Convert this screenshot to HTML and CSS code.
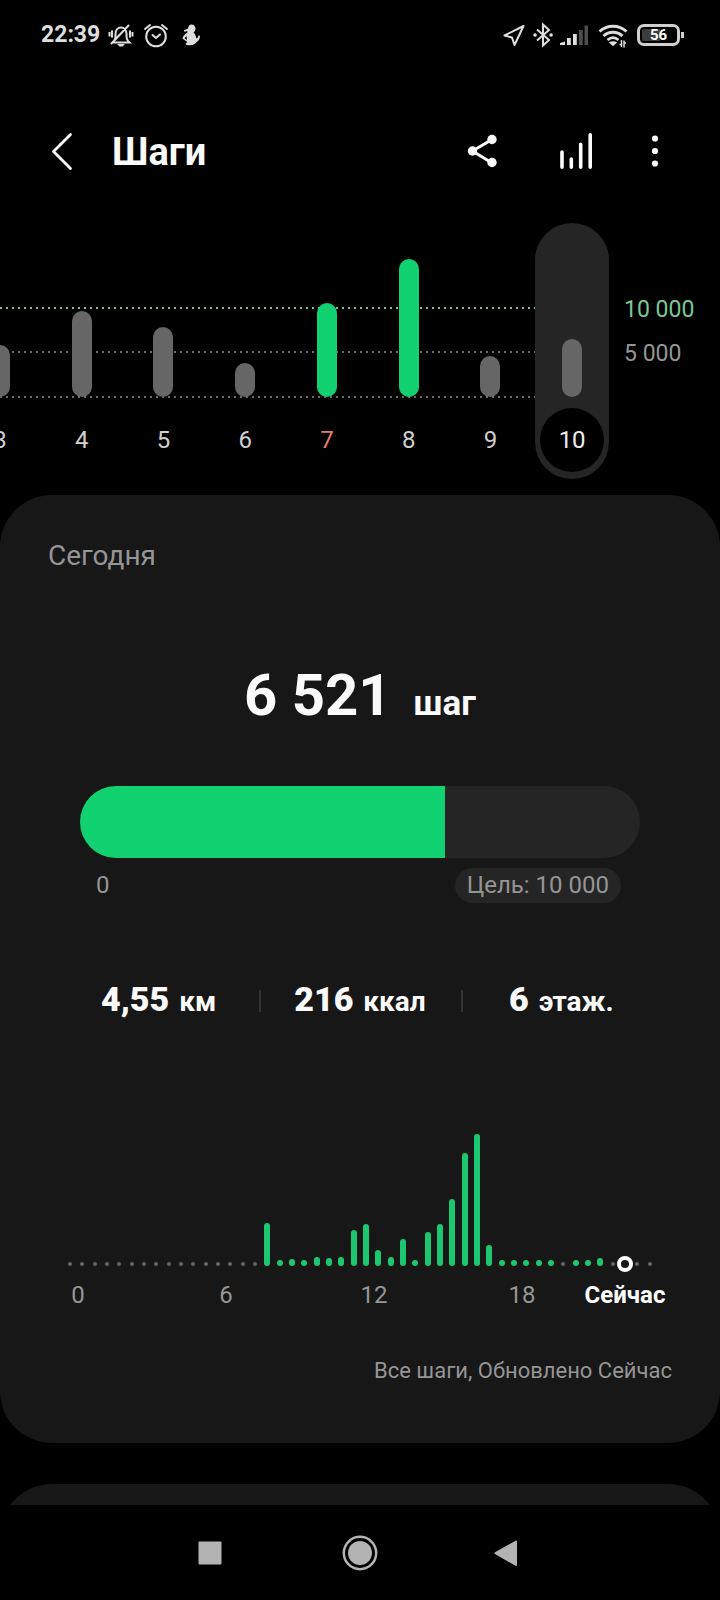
FILE: index.html
```html
<!DOCTYPE html>
<html lang="ru">
<head>
<meta charset="utf-8">
<meta name="viewport" content="width=device-width, initial-scale=1">
<title>Шаги</title>
<link rel="stylesheet" href="styles.css">
</head>
<body>
<div class="status">
  <span class="clock">22:39</span>
  <svg class="icon" width="26" height="26" viewBox="0 0 26 26" fill="none" stroke="currentColor" stroke-width="2">
    <path d="M4.500 20.500C7.500 18 7.500 16 7.500 12c0-4 2.500-6.500 5.500-6.500s5.500 2.500 5.500 6.500c0 4 0 6 3 8.500zM21 3 3 22M1.500 10v4.500M4 8.500v7M22 8.500v7M24.500 10v4.500"/>
    <path d="M9 22h8l-2.500 2.500h-3z" fill="currentColor" stroke="none"/>
  </svg>
  <svg class="icon alarm" width="26" height="26" viewBox="0 0 26 26" fill="none" stroke="currentColor" stroke-width="2" stroke-linecap="round">
    <circle cx="13" cy="14.500" r="9.800"/><path d="m9.500 13 3.500 3 4-3.500M2 7 7 3M24 7 19 3"/>
  </svg>
  <svg class="icon figure" width="22" height="26" viewBox="0 0 22 26">
    <path fill="currentColor" d="M11.500 2.500c2.500 0 4 1.800 4 4 0 1.800-.8 3-2 4 1.700 1.500 2.700 3.500 2.700 6 1.300-.4 2-1.500 2.300-3l1.500.3c0 3-1.300 5.200-3.300 6.200-1.200 2-3.500 3.200-6.700 3.200-2.500 0-4-.5-4.600-1.500l2-1.700-5-3.500c.5-2.500 2.500-4.500 5-6L7.300 9l-3 .8-.4-1.500 4.200-1.700C8.300 4 9.500 2.500 11.500 2.500zM6.500 14l-2 2.200L7 18z"/>
  </svg>
  <span class="grow"></span>
  <svg class="icon" width="24" height="26" viewBox="0 0 24 26" fill="none" stroke="currentColor" stroke-width="2" stroke-linejoin="round">
    <path d="M21.500 4 2.500 13.500l7.500 2 2.500 7.500z"/>
  </svg>
  <svg class="icon bt" width="22" height="26" viewBox="0 0 22 26" fill="none" stroke="currentColor" stroke-width="2">
    <path d="m5 7.500 12 10.500-6 5.500V2.500l6 5.500L5 18.500"/><path stroke-width="3.500" stroke-linecap="round" d="M3 13h.1M19 13h.1"/>
  </svg>
  <svg class="icon" width="28" height="26" viewBox="0 0 28 26" fill="currentColor">
    <path d="M0 23v-2l5-1.500V23zM7 16h3.800v7H7zM13 12h3.800v11H13z"/><path opacity=".35" d="M19 8h3.800v15H19zM24.500 3.500H28V23h-3.500z"/>
  </svg>
  <svg class="icon wifi" width="30" height="26" viewBox="0 0 30 26" fill="none" stroke="currentColor" stroke-width="2.800">
    <path d="M1.500 9.500c7.500-7 19.500-7 27 0M5.500 14c5.500-5 13.500-5 19 0M9.500 18c3.500-3 7.500-3 11 0"/><path fill="currentColor" stroke="none" d="m10.800 20.500 4.200 3.700 4.200-3.700c-2.600-1.800-5.800-1.800-8.400 0z"/><path stroke-width="1.500" d="M23.500 18v7M21.500 22.500h2M26 18.500v7M26 21h2"/>
  </svg>
  <span class="battery">56</span>
</div>

<header class="header">
  <button class="tool back" aria-label="Назад"><svg width="24" height="40" viewBox="0 0 24 40" fill="none" stroke="currentColor" stroke-width="2.800" stroke-linecap="round" stroke-linejoin="round"><path d="M20.500 3.500 3.500 20.500l17 17"/></svg></button>
  <h1 class="title">Шаги</h1>
  <button class="tool" aria-label="Поделиться"><svg width="32" height="40" viewBox="0 0 32 40"><path d="M26 8.500 6.500 20 26 32" fill="none" stroke="currentColor" stroke-width="3"/><g fill="currentColor"><circle cx="26" cy="8.500" r="4.700"/><circle cx="6.500" cy="20" r="4.700"/><circle cx="26" cy="31.500" r="4.700"/></g></svg></button>
  <button class="tool stats-button" aria-label="Статистика"><svg width="34" height="40" viewBox="0 0 34 40" fill="none" stroke="currentColor" stroke-width="3.600" stroke-linecap="round"><path d="M3 21v15.200M12.300 28v8.200M21.700 13.300v22.900M31.200 3.800v32.400"/></svg></button>
  <button class="tool" aria-label="Ещё"><svg width="12" height="40" viewBox="0 0 12 40" fill="currentColor"><circle cx="6" cy="7.500" r="3.100"/><circle cx="6" cy="20" r="3.100"/><circle cx="6" cy="32.500" r="3.100"/></svg></button>
</header>

<main class="main">
  <section class="week">
    <div class="plot">
      <div class="lines"><i class="line goal"></i><i class="line"></i><i class="line"></i></div>
      <div class="days">
        <div class="day"><i class="bar" style="height:52px"></i><span class="num">3</span></div>
        <div class="day"><i class="bar" style="height:86px"></i><span class="num">4</span></div>
        <div class="day"><i class="bar" style="height:70px"></i><span class="num">5</span></div>
        <div class="day"><i class="bar" style="height:34px"></i><span class="num">6</span></div>
        <div class="day"><i class="bar done" style="height:94px"></i><span class="num sunday">7</span></div>
        <div class="day"><i class="bar done" style="height:138px"></i><span class="num">8</span></div>
        <div class="day"><i class="bar" style="height:41px"></i><span class="num">9</span></div>
        <div class="day today"><i class="bar" style="height:58px"></i><span class="num">10</span></div>
      </div>
    </div>
    <div class="scale"><span class="goal-text">10 000</span><span>5 000</span></div>
  </section>

  <section class="card">
    <h2 class="subtitle">Сегодня</h2>
    <p class="total"><strong class="count">6 521</strong><span class="unit">шаг</span></p>
    <div class="progress"><div class="fill" style="width:65.21%"></div></div>
    <div class="range"><span>0</span><span class="target">Цель: 10 000</span></div>
    <div class="facts">
      <div class="fact"><b>4,55</b><span>км</span></div>
      <div class="fact"><b>216</b><span>ккал</span></div>
      <div class="fact"><b>6</b><span>этаж.</span></div>
    </div>
    <div class="hours">
      <i></i><i></i><i></i><i></i><i></i><i></i><i></i><i></i><i></i><i></i><i></i><i></i><i></i><i></i><i></i><i></i>
      <i class="on" style="height:43px"></i><i class="on" style="height:6px"></i><i class="on" style="height:7px"></i><i class="on" style="height:6px"></i><i class="on" style="height:9px"></i><i class="on" style="height:8px"></i><i class="on" style="height:9px"></i><i class="on" style="height:36px"></i>
      <i class="on" style="height:42px"></i><i class="on" style="height:16px"></i><i class="on" style="height:9px"></i><i class="on" style="height:27px"></i><i class="on" style="height:6px"></i><i class="on" style="height:34px"></i><i class="on" style="height:42px"></i><i class="on" style="height:67px"></i>
      <i class="on" style="height:113px"></i><i class="on" style="height:132px"></i><i class="on" style="height:21px"></i><i class="on" style="height:6px"></i><i class="on" style="height:6px"></i><i class="on" style="height:6px"></i><i class="on" style="height:6px"></i><i class="on" style="height:6px"></i>
      <i></i><i class="on" style="height:6px"></i><i class="on" style="height:6px"></i><i class="on" style="height:8px"></i><i></i><i class="now"></i><i></i><i></i>
    </div>
    <div class="axis"><span>0</span><span>6</span><span>12</span><span>18</span><b>Сейчас</b></div>
    <p class="note">Все шаги, Обновлено Сейчас</p>
  </section>

  <div class="peek"><section class="next-card"></section></div>
</main>

<nav class="nav">
  <button class="tool" aria-label="Недавние"><svg width="36" height="36" viewBox="0 0 36 36"><rect x="6.500" y="6.500" width="23" height="23" rx="1" fill="currentColor"/></svg></button>
  <button class="tool" aria-label="Домой"><svg width="36" height="36" viewBox="0 0 36 36"><circle cx="18" cy="18" r="16.200" fill="none" stroke="currentColor" stroke-width="2.500"/><circle cx="18" cy="18" r="12" fill="currentColor"/></svg></button>
  <button class="tool" aria-label="Назад"><svg width="36" height="36" viewBox="0 0 36 36"><path d="M24 6.500v23.500L3.500 18.200z" fill="currentColor" stroke="currentColor" stroke-width="2" stroke-linejoin="round"/></svg></button>
</nav>
</body>
</html>
```

FILE: styles.css
```css
* { box-sizing: border-box; }

body {
  margin: 0;
  min-height: 100vh;
  display: flex;
  flex-direction: column;
  background: #000;
  color: #fafafa;
  font-family: Roboto, "Noto Sans", sans-serif;
  font-size: 24px;
  line-height: 28px;
}

h1, h2, p { margin: 0; }
i { font-style: normal; }
svg { display: block; }

.tool {
  display: block;
  padding: 0;
  border: 0;
  background: none;
  color: inherit;
}

/* Status bar */
.status {
  display: flex;
  align-items: center;
  height: 80px;
  padding: 0 40px 10px 41px;
  color: #dedede;
}
.clock {
  margin-right: 8px;
  font-size: 23px;
  font-weight: 700;
}
.icon { flex: none; }
.alarm { margin-left: 9px; }
.figure { margin-left: 11px; }
.grow { flex: 1; }
.bt { margin: 0 6px; }
.wifi { margin: 0 9px 0 10px; }
.battery {
  position: relative;
  width: 43px;
  height: 22px;
  border: 3px solid #cfcfcf;
  border-radius: 7px;
  background: linear-gradient(90deg, #3c3c3c 56%, #000 56%) content-box;
  padding: 2px;
  color: #fff;
  font-size: 15px;
  font-weight: 700;
  line-height: 13px;
  text-align: center;
}
.battery::after {
  content: "";
  position: absolute;
  right: -7px;
  top: 5px;
  width: 3px;
  height: 6px;
  background: #cfcfcf;
}

/* Title bar */
.header {
  display: flex;
  align-items: center;
  height: 143px;
  padding: 0 59px 2px 50px;
}
.title {
  flex: 1;
  margin-left: 38px;
  padding-top: 3px;
  font-size: 38px;
  line-height: 48px;
  font-weight: 700;
}
.stats-button { margin: 0 56px 0 61px; }

.main {
  flex: 1;
  display: flex;
  flex-direction: column;
}

/* Week chart */
.week { display: flex; height: 272px; }
.plot {
  position: relative;
  flex: 1;
  min-width: 0;
  overflow: hidden;
}
.lines {
  position: absolute;
  inset: 84px 78px auto 0;
  display: grid;
  gap: 42px;
}
.line {
  height: 2px;
  background: repeating-linear-gradient(90deg, #6c6c6c 0 2px, transparent 2px 6px);
}
.line.goal { background: repeating-linear-gradient(90deg, #7cc699 0 2px, transparent 2px 6px); }
.line:last-child { margin-top: 1px; }
.days {
  position: relative;
  display: grid;
  grid-template-columns: repeat(8, minmax(0, 1fr));
  height: 256px;
  margin-left: -41px;
}
.day {
  display: flex;
  flex-direction: column;
  align-items: center;
  justify-content: flex-end;
  padding-bottom: 7px;
}
.bar {
  width: 20px;
  margin-bottom: 11px;
  border-radius: 10px;
  background: #666;
}
.bar.done { background: #12d170; }
.num {
  width: 64px;
  height: 64px;
  border-radius: 50%;
  color: #d0d0d0;
  line-height: 64px;
  text-align: center;
}
.sunday { color: #e57b74; }
.today {
  width: 74px;
  justify-self: center;
  border-radius: 37px;
  background: #252525;
}
.today .num { background: #000; color: #eee; }
.scale {
  display: flex;
  flex-direction: column;
  gap: 16px;
  width: 107px;
  padding: 73px 0 0 11px;
  color: #959595;
  font-size: 23px;
}
.goal-text { color: #79c895; }

/* Today card */
.card {
  border-radius: 52px;
  background: #171717;
  padding: 45px 48px 58px;
}
.subtitle {
  color: #959595;
  font-size: 28px;
  line-height: 32px;
  font-weight: 400;
}
.total {
  display: flex;
  align-items: baseline;
  justify-content: center;
  gap: 22px;
  margin-top: 87px;
  line-height: 72px;
}
.count { font-size: 58px; font-weight: 700; }
.unit { font-size: 35px; font-weight: 700; }
.progress {
  height: 72px;
  margin: 46px 32px 0;
  border-radius: 36px;
  background: #252525;
  overflow: hidden;
}
.fill { height: 100%; background: #12d170; }
.range {
  display: flex;
  justify-content: space-between;
  align-items: center;
  margin: 10px 51px 0 48px;
  color: #959595;
  line-height: 35px;
}
.target {
  padding: 0 12px;
  border-radius: 18px;
  background: #252525;
}
.facts {
  display: grid;
  grid-template-columns: repeat(3, 1fr);
  margin: 74px 10px 0;
}
.fact {
  position: relative;
  display: flex;
  align-items: baseline;
  justify-content: center;
  gap: 10px;
  line-height: 44px;
  font-size: 28px;
  font-weight: 700;
}
.fact b { font-size: 34px; }
.fact + .fact::before {
  content: "";
  position: absolute;
  left: 0;
  top: 13px;
  width: 2px;
  height: 22px;
  background: #333;
}

/* Half-hour chart */
.hours {
  display: grid;
  grid-template-columns: repeat(48, minmax(0, 1fr));
  align-items: end;
  justify-items: center;
  height: 132px;
  margin: 110px 16px 0;
}
.hours i {
  width: 4px;
  height: 4px;
  border-radius: 3px;
  background: #666;
}
.hours .on { width: 6px; background: #1dc76f; }
.hours .now {
  width: 16px;
  height: 16px;
  margin-bottom: -6px;
  border: 4px solid #fff;
  border-radius: 50%;
  background: #171717;
}
.axis {
  display: grid;
  grid-template-columns: repeat(4, minmax(0, 148fr)) minmax(0, 58fr);
  justify-items: center;
  margin: 15px 18px 0 -44px;
  color: #959595;
  white-space: nowrap;
}
.axis b { color: #fff; }
.note {
  margin-top: 48px;
  color: #959595;
  font-size: 22px;
  text-align: right;
}

.peek {
  flex: 1 0 21px;
  height: 21px;
  margin-top: 41px;
  overflow: hidden;
}
.next-card {
  height: 120px;
  border-radius: 52px;
  background: #171717;
}

/* System navigation */
.nav {
  display: flex;
  justify-content: center;
  align-items: center;
  gap: 114px;
  height: 96px;
  color: #b3b3b3;
}
```
